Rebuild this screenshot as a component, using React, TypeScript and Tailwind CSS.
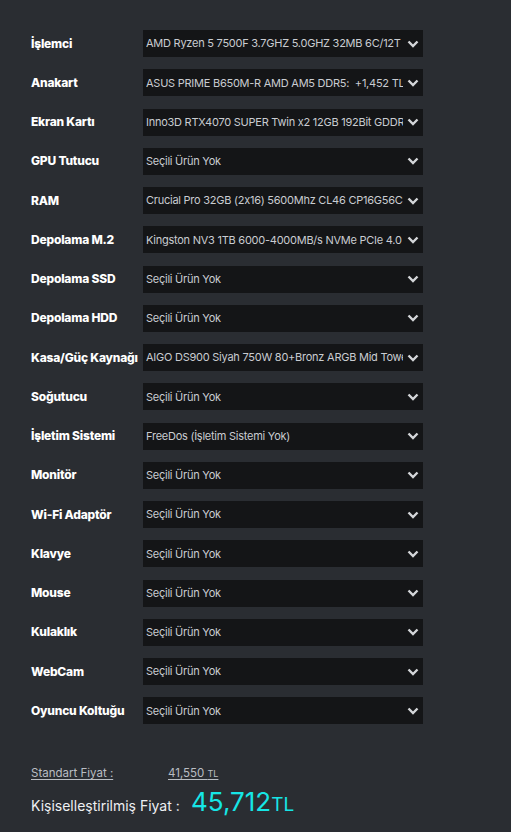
// @ts-nocheck
import React from "react"

type Row = {
  label: string
  value: string
}

const rows: Row[] = [
  { label: "İşlemci",           value: "AMD Ryzen 5 7500F 3.7GHZ 5.0GHZ 32MB 6C/12T" },
  { label: "Anakart",           value: "ASUS PRIME B650M-R AMD AM5 DDR5:  +1,452 TL" },
  { label: "Ekran Kartı",       value: "Inno3D RTX4070 SUPER Twin x2 12GB 192Bit GDDR6X" },
  { label: "GPU Tutucu",        value: "Seçili Ürün Yok" },
  { label: "RAM",               value: "Crucial Pro 32GB (2x16) 5600Mhz CL46 CP16G56C46U5" },
  { label: "Depolama M.2",      value: "Kingston NV3 1TB 6000-4000MB/s NVMe PCIe 4.0 M.2 SSD" },
  { label: "Depolama SSD",      value: "Seçili Ürün Yok" },
  { label: "Depolama HDD",      value: "Seçili Ürün Yok" },
  { label: "Kasa/Güç Kaynağı",  value: "AIGO DS900 Siyah 750W 80+Bronz ARGB Mid Tower Kasa" },
  { label: "Soğutucu",          value: "Seçili Ürün Yok" },
  { label: "İşletim Sistemi",   value: "FreeDos (İşletim Sistemi Yok)" },
  { label: "Monitör",           value: "Seçili Ürün Yok" },
  { label: "Wi-Fi Adaptör",     value: "Seçili Ürün Yok" },
  { label: "Klavye",            value: "Seçili Ürün Yok" },
  { label: "Mouse",             value: "Seçili Ürün Yok" },
  { label: "Kulaklık",          value: "Seçili Ürün Yok" },
  { label: "WebCam",            value: "Seçili Ürün Yok" },
  { label: "Oyuncu Koltuğu",    value: "Seçili Ürün Yok" },
]

export default function App() {
  return (
    <div className="min-h-[832px] w-[511px] bg-[#2a2d32] pt-[30px] pl-[31px] font-['Inter','Noto_Sans',sans-serif] [font-feature-settings:'calt'_0]">

      {/* ── Part list ── */}
      <div className="flex flex-col gap-[12.25px]">
        {rows.map((r) => (
          <PartRow key={r.label} {...r} />
        ))}
      </div>

      {/* ── Prices ── */}
      <div className="mt-[41px] flex items-baseline text-[11.5px] text-[#b9bdc3]">
        <span className="w-[137px] underline underline-offset-2">Standart Fiyat :</span>
        <span className="underline underline-offset-2">
          41,550 <span className="text-[9px]">TL</span>
        </span>
      </div>
      <div className="mt-[6px] flex items-baseline">
        <span className="w-[160px] text-[14px] text-[#eef0f2]">Kişiselleştirilmiş Fiyat :</span>
        <span className="text-[26px] leading-none text-[#16e6e6]">45,712</span>
        <span className="text-[19px] leading-none text-[#16e6e6]">TL</span>
      </div>
    </div>
  )
}

// ─── Row ──────────────────────────────────────────────────────────────────────

function PartRow({ label, value }: Row) {
  return (
    <div className="flex items-center">
      <div className="w-[112px] whitespace-nowrap text-[12px] font-extrabold tracking-[-0.2px] text-white">
        {label}
      </div>
      <div className="flex h-[27px] w-[280px] items-center bg-[#141517] pl-[3px] pr-[4px]">
        <div className="flex-1 overflow-hidden whitespace-pre text-[11px] tracking-[-0.25px] text-[#c9ccd1]">
          {value}
        </div>
        <Chevron />
      </div>
    </div>
  )
}

function Chevron() {
  return (
    <svg width="12" height="8" viewBox="0 0 12 8" className="ml-[4px] shrink-0">
      <polyline points="1.5,1.5 6,6 10.5,1.5" fill="none" stroke="#d4d6d9" strokeWidth="2.4" />
    </svg>
  )
}
